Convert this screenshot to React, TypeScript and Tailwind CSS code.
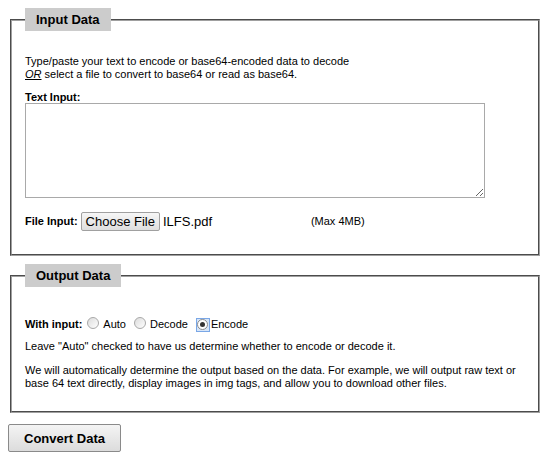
import React from 'react';

function Radio({ checked }: { checked?: boolean }) {
  if (checked) {
    return (
      <span className="inline-flex items-center justify-center w-[14px] h-[14px] border border-[#7aa7e6] bg-[#d6e5f8]">
        <span className="flex items-center justify-center w-[11px] h-[11px] rounded-full border border-[#8c8c8c] bg-white">
          <span className="w-[5px] h-[5px] rounded-full bg-[#333]" />
        </span>
      </span>
    );
  }
  return (
    <span className="inline-block w-[12px] h-[12px] rounded-full border border-[#a8a8a8] bg-gradient-to-br from-[#dcdcdc] to-[#ffffff]" />
  );
}

export default function App() {
  return (
    <div className="w-[550px] h-[459px] bg-white text-black text-[11px] leading-[13px] font-['Liberation_Sans',Arial,sans-serif] pt-[8px] pl-[10px] pr-[10px]">
      <fieldset className="border-2 [border-style:groove] border-[#a0a0a0] px-[13px] pt-[24px] pb-[23px]">
        <legend className="bg-[#cccccc] px-[11px] h-[23px] leading-[23px] text-[13px] font-bold">Input Data</legend>
        <p>
          Type/paste your text to encode or base64-encoded data to decode
          <br />
          <span className="italic underline">OR</span> select a file to convert to base64 or read as base64.
        </p>
        <div className="mt-[10px] font-bold leading-[12px]">Text Input:</div>
        <textarea className="block w-[460px] h-[95px] border border-[#a9a9a9] bg-white outline-none" />
        <div className="mt-[14px] flex items-center h-[19px]">
          <span className="font-bold">File Input:</span>
          <button className="ml-[3px] h-[19px] px-[4px] text-[13px] leading-[17px] border border-[#a0a0a0] rounded-[2px] bg-gradient-to-b from-[#f6f6f6] to-[#dedede]">
            Choose File
          </button>
          <span className="ml-[3px] text-[13px] w-[148px]">ILFS.pdf</span>
          <span>(Max 4MB)</span>
        </div>
      </fieldset>

      <fieldset className="mt-[8px] border-2 [border-style:groove] border-[#a0a0a0] px-[13px] pt-[30px] pb-[21px]">
        <legend className="bg-[#cccccc] px-[11px] h-[23px] leading-[23px] text-[13px] font-bold">Output Data</legend>
        <div className="flex items-center h-[15px]">
          <span className="font-bold">With input:</span>
          <span className="ml-[5px]"><Radio /></span>
          <span className="ml-[4px]">Auto</span>
          <span className="ml-[8px]"><Radio /></span>
          <span className="ml-[4px]">Decode</span>
          <span className="ml-[8px]"><Radio checked /></span>
          <span className="ml-[1px]">Encode</span>
        </div>
        <p className="mt-[8px]">Leave "Auto" checked to have us determine whether to encode or decode it.</p>
        <p className="mt-[11px]">
          We will automatically determine the output based on the data. For example, we will output raw text or
          base 64 text directly, display images in img tags, and allow you to download other files.
        </p>
      </fieldset>

      <button className="mt-[11px] -ml-[2px] w-[113px] h-[28px] border border-[#8a8a8a] rounded-[2px] bg-gradient-to-b from-[#f4f4f4] to-[#dcdcdc] text-[13px] font-bold">
        Convert Data
      </button>
    </div>
  );
}
